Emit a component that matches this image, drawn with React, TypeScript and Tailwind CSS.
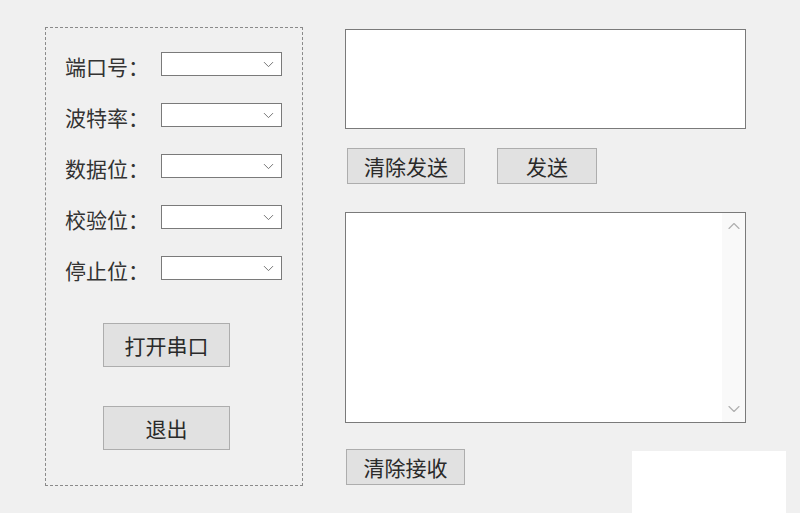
import { ChevronDown, ChevronUp } from "lucide-react";

const fields = ["端口号：", "波特率：", "数据位：", "校验位：", "停止位："];

function Combo() {
  return (
    <div className="w-[121px] h-[24px] bg-white border border-[#7a7a7a] flex items-center justify-end pr-[4px]">
      <ChevronDown className="w-[17px] h-[17px] text-[#6a6a6a]" strokeWidth={1.3} />
    </div>
  );
}

function Btn({ label, className }: { label: string; className: string }) {
  return (
    <button className={`bg-[#e1e1e1] border border-[#adadad] text-[#2a2a2a] text-[21px] leading-none flex items-center justify-center ${className}`}>
      {label}
    </button>
  );
}

export default function App() {
  return (
    <div
      className="relative w-[800px] h-[513px] bg-[#f0f0f0] flex overflow-hidden"
      style={{ fontFamily: '"Noto Sans CJK SC", "Noto Sans", sans-serif' }}
    >
      {/* settings group */}
      <div className="ml-[45px] mt-[27px] w-[258px] h-[459px] border border-dashed border-[#8a8a8a] flex flex-col pt-[24px]">
        <div className="flex flex-col gap-[27px]">
          {fields.map((f) => (
            <div key={f} className="flex items-center h-[24px] pl-[19px]">
              <span className="w-[96px] mt-[5px] text-[21px] leading-none text-[#333]">{f}</span>
              <Combo />
            </div>
          ))}
        </div>
        <div className="flex flex-col gap-[39px] pl-[57px] mt-[43px]">
          <Btn label="打开串口" className="w-[127px] h-[44px]" />
          <Btn label="退出" className="w-[127px] h-[44px]" />
        </div>
      </div>

      {/* send / receive */}
      <div className="ml-[42px] mt-[29px] flex flex-col">
        <div className="w-[401px] h-[100px] bg-white border border-[#7a7a7a]" />
        <div className="flex gap-[32px] mt-[19px] pl-[2px]">
          <Btn label="清除发送" className="w-[118px] h-[36px]" />
          <Btn label="发送" className="w-[100px] h-[36px]" />
        </div>
        <div className="mt-[28px] w-[401px] h-[211px] bg-white border border-[#7a7a7a] flex justify-end">
          <div className="w-[23px] h-full bg-[#f9f9f9] flex flex-col items-center justify-between py-[3px]">
            <ChevronUp className="w-[20px] h-[20px] text-[#b0b0b0]" strokeWidth={1.4} />
            <ChevronDown className="w-[20px] h-[20px] text-[#b0b0b0]" strokeWidth={1.4} />
          </div>
        </div>
        <div className="mt-[26px] pl-[1px]">
          <Btn label="清除接收" className="w-[119px] h-[36px]" />
        </div>
      </div>

      {/* blank patch at bottom right */}
      <div className="absolute left-[632px] top-[451px] w-[154px] h-[62px] bg-white" />
    </div>
  );
}
